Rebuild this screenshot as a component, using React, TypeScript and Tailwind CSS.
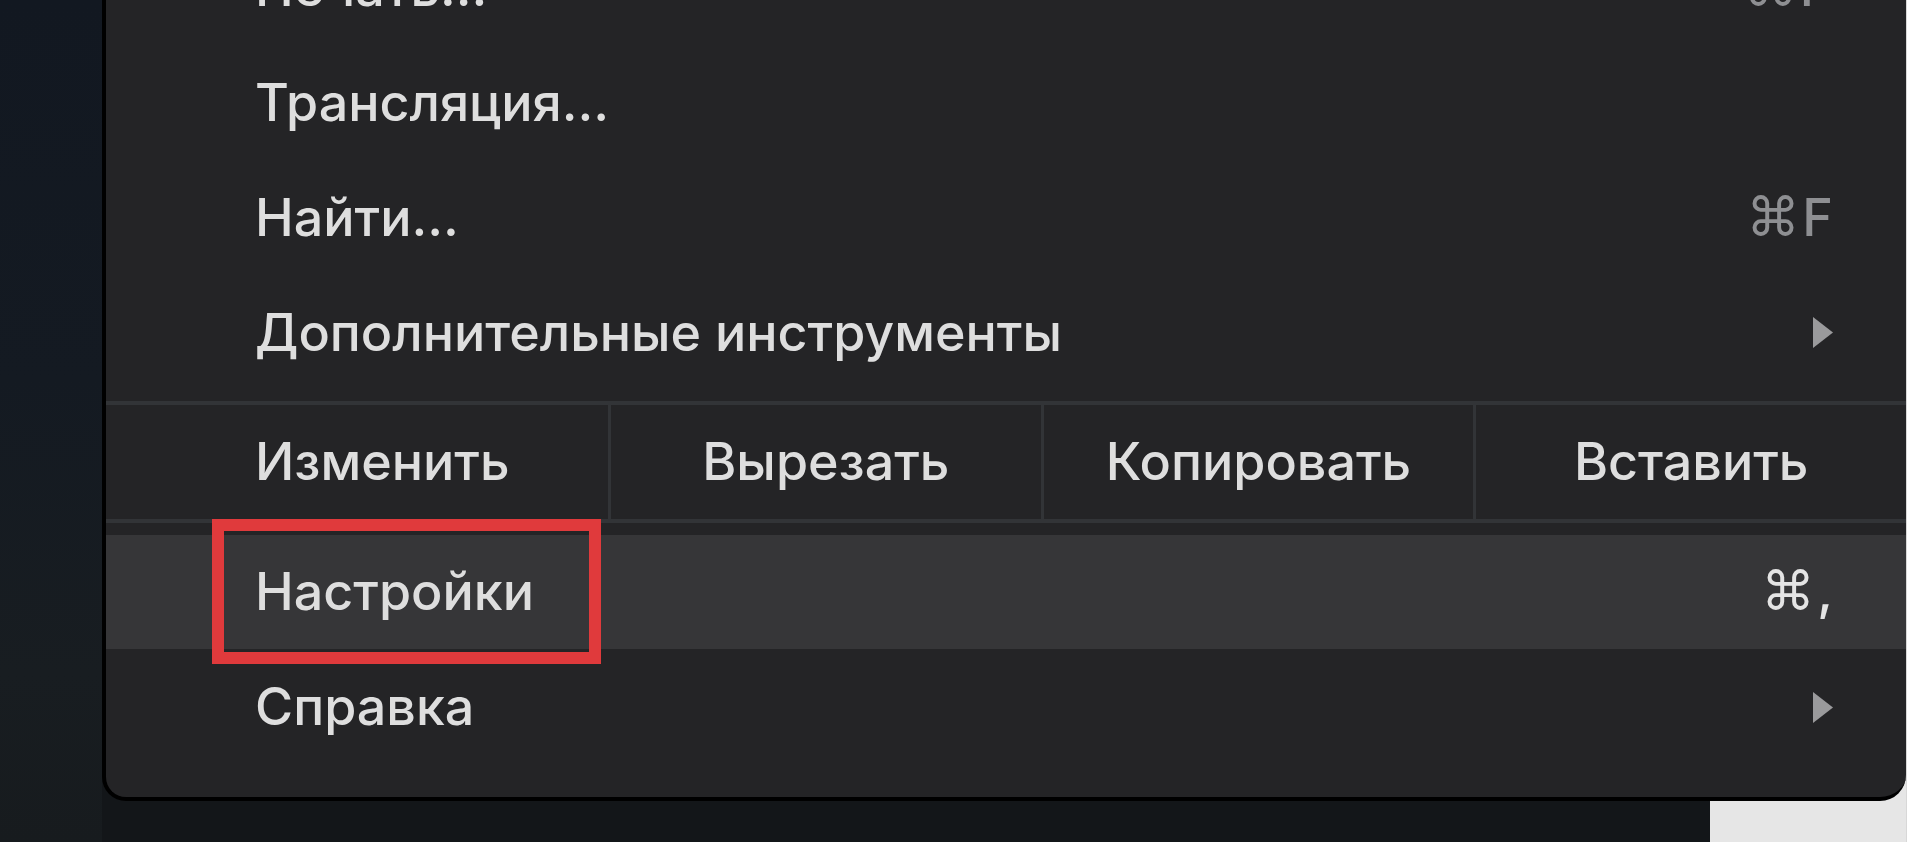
import React from 'react'

const font = "font-['Inter','DejaVu_Sans',sans-serif]"
const labelCls = 'text-[52px] leading-none font-medium text-[#dedede]'

interface RowProps {
    label: string;
    shortcut?: string;
    submenu?: boolean;
    active?: boolean;
    outlined?: boolean;
    height?: string;
}

const Arrow = () => (
    <svg width="20" height="31" viewBox="0 0 20 31" className="shrink-0">
        <path d="M0 0 L20 15.5 L0 31 Z" fill="#9a9a9c" />
    </svg>
)

const Shortcut = ({ keys, active }: { keys: string; active?: boolean }) => (
    <span className={`flex items-center gap-[2px] text-[52px] leading-none font-medium ${active ? 'text-[#e4e4e4]' : 'text-[#8e8f92]'}`}>
        <span className="font-['DejaVu_Sans',sans-serif] font-normal text-[54px]">⌘</span>
        <span>{keys}</span>
    </span>
)

const MenuRow = ({ label, shortcut, submenu, active, outlined, height = 'h-[115px]' }: RowProps) => (
    <div className={`relative flex items-center justify-between pl-[149px] pr-[73px] ${height} ${active ? 'bg-[#363638]' : ''}`}>
        <span className={labelCls}>{label}</span>
        {shortcut && <Shortcut keys={shortcut} active={active} />}
        {submenu && <Arrow />}
        {/* red annotation box */}
        {outlined && (
            <div className="absolute left-[106px] top-[-16px] w-[389px] h-[145px] border-[12px] border-[#e03a3c]" />
        )}
    </div>
)

const EditButton = ({ label }: { label: string }) => (
    <div className="flex-1 flex items-center justify-center border-l-[3px] border-[#323437]">
        <span className={labelCls}>{label}</span>
    </div>
)

export default function App() {
    return (
        <div className={`flex h-[842px] w-[1907px] overflow-hidden bg-[linear-gradient(to_right,#131619_1710px,#e6e6e6_1710px)] ${font}`}>
            <div className="w-[102px] shrink-0 bg-[linear-gradient(180deg,#121821,#141a22_45%,#181d21_80%,#171b1e)]" />

            <div className="flex-1 self-start -mt-[70px] flex flex-col bg-[#242426] border-l-4 border-b-4 border-black rounded-bl-[24px] rounded-br-[26px]">
                <MenuRow label="Печать…" shortcut="P" />
                <MenuRow label="Трансляция…" />
                <MenuRow label="Найти…" shortcut="F" />
                <MenuRow label="Дополнительные инструменты" submenu />
                <div className="h-[11px]" />
                <div className="h-[4px] bg-[#323437]" />

                <div className="flex h-[114px]">
                    <div className="w-[502px] flex items-center pl-[149px]">
                        <span className={labelCls}>Изменить</span>
                    </div>
                    <EditButton label="Вырезать" />
                    <EditButton label="Копировать" />
                    <EditButton label="Вставить" />
                </div>

                <div className="h-[4px] bg-[#323437]" />
                <div className="h-[12px]" />
                <MenuRow label="Настройки" shortcut="," active outlined height="h-[114px]" />
                <MenuRow label="Справка" submenu height="h-[116px]" />
                <div className="h-[32px]" />
            </div>

            <div className="w-[1px] shrink-0 bg-[#d8d8d8]" />
        </div>
    )
}
